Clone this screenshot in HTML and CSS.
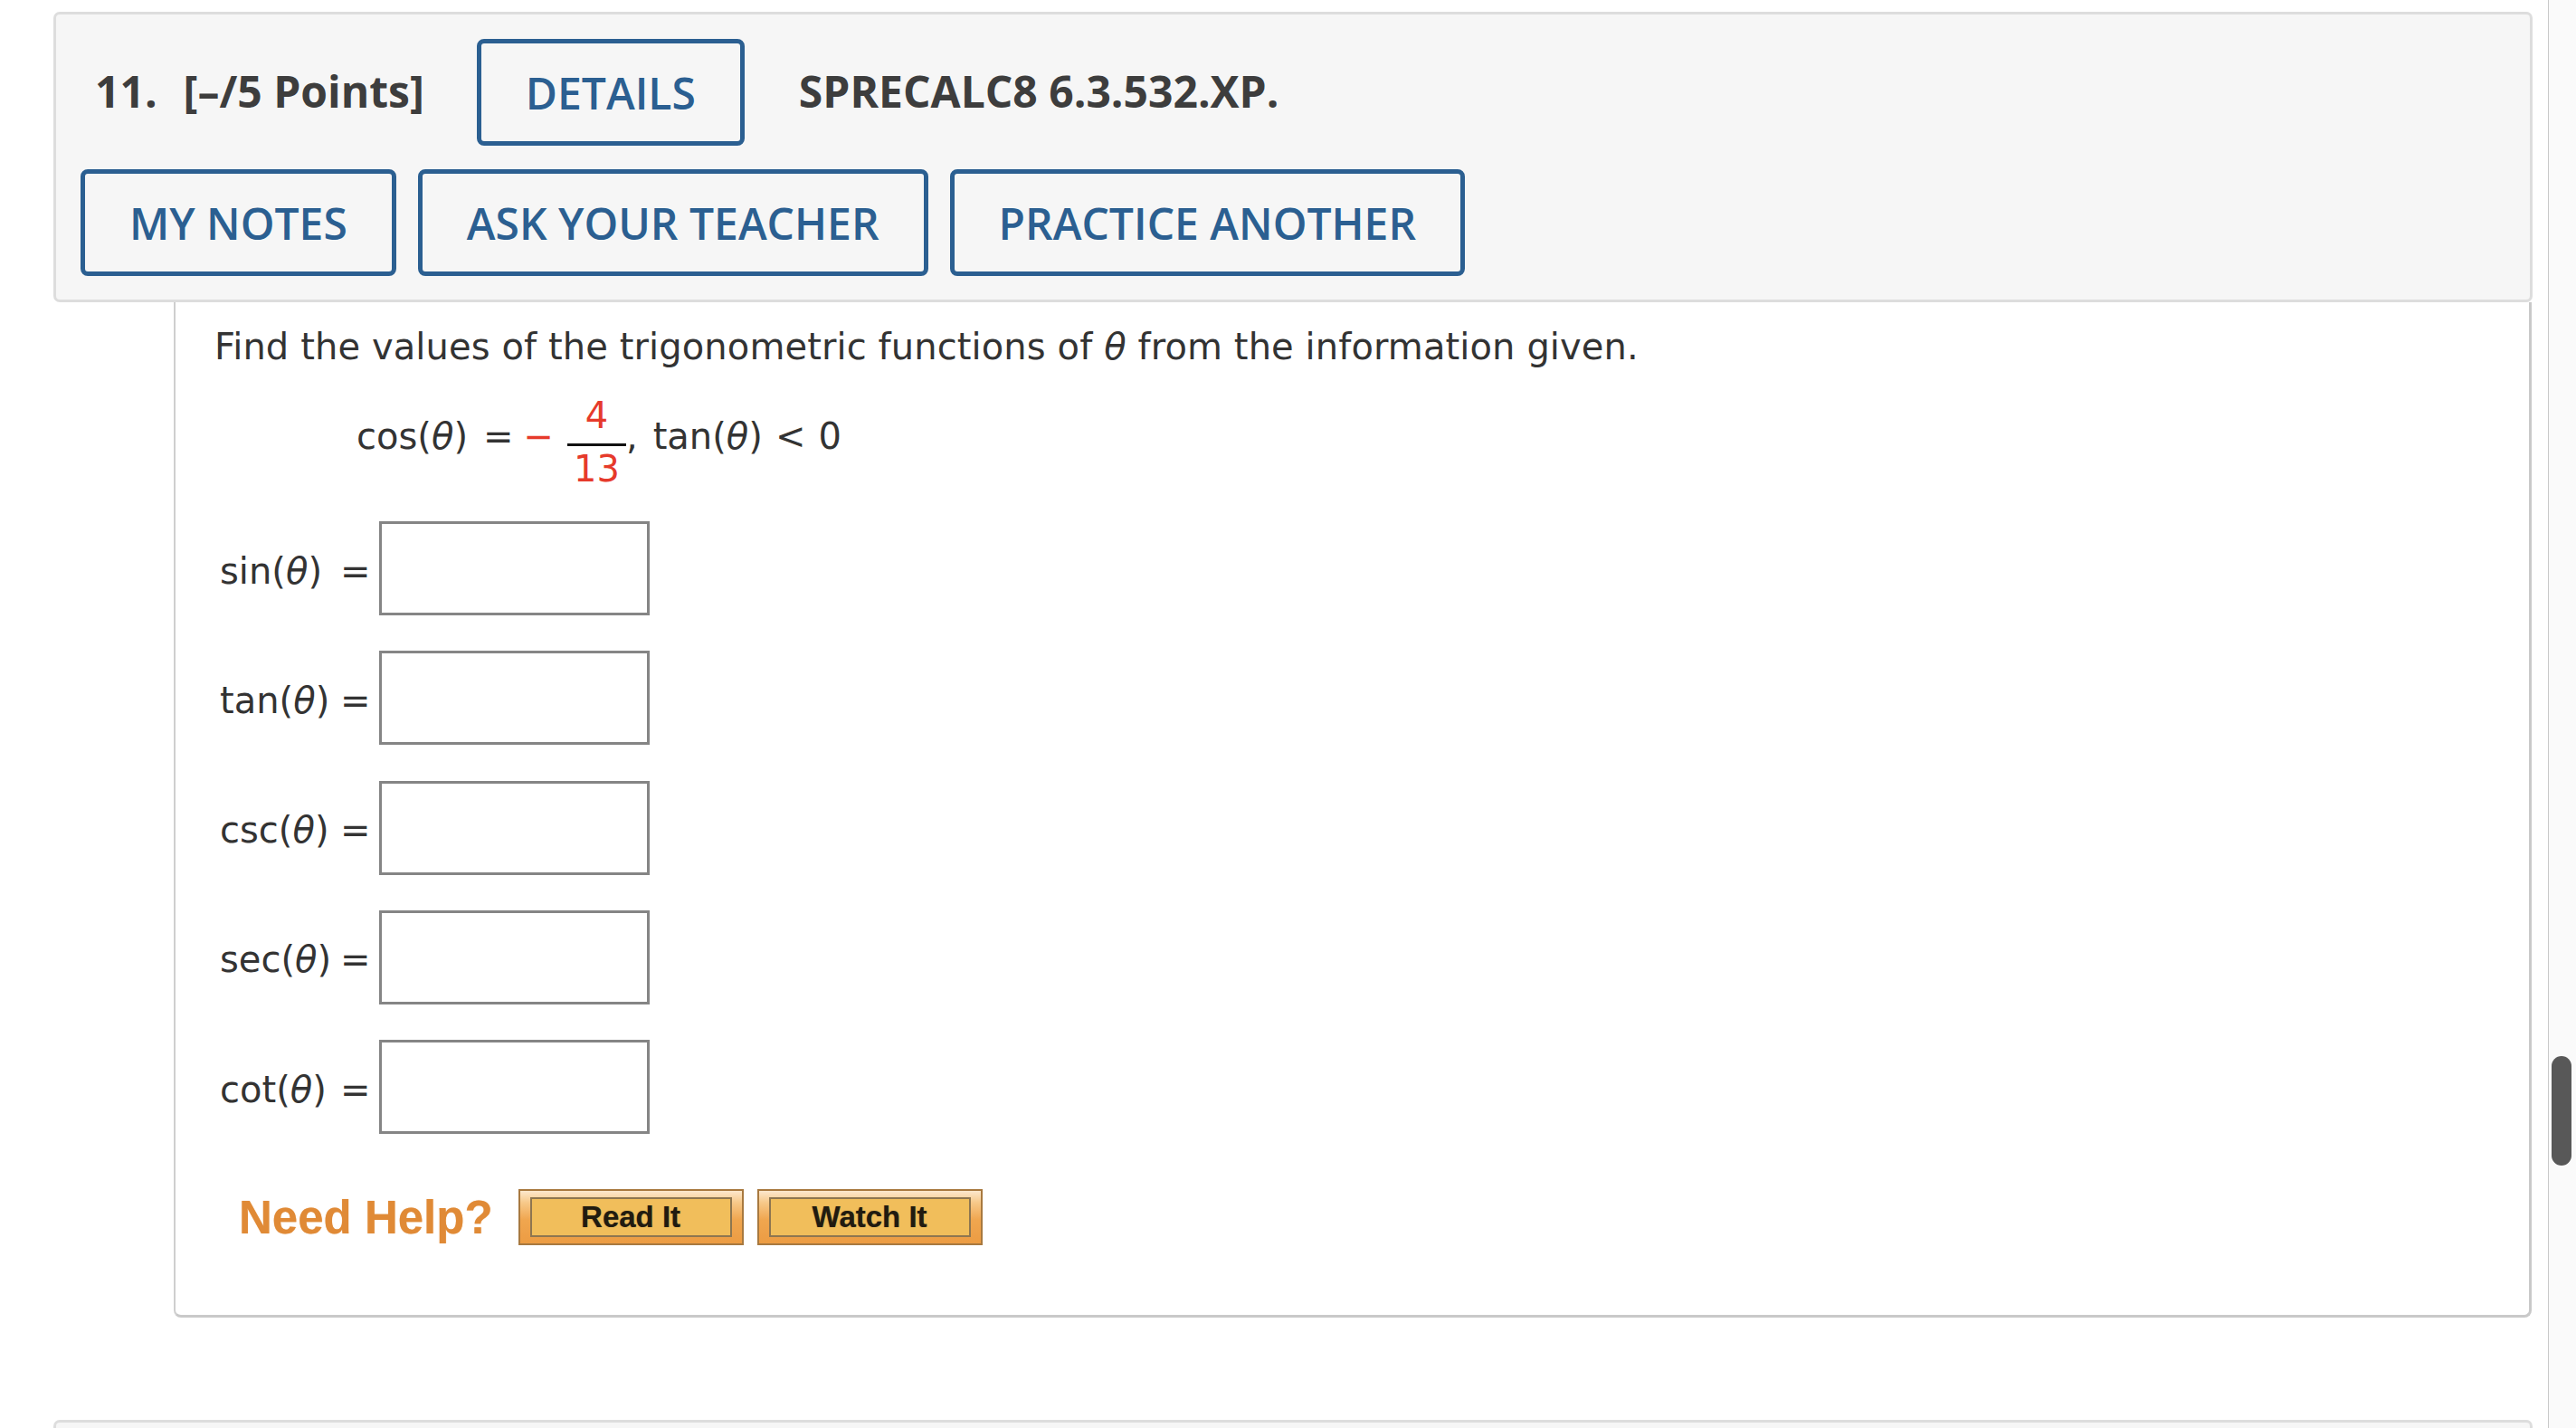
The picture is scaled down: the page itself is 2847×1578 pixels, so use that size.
FILE: index.html
```html
<!DOCTYPE html>
<html lang="en">
<head>
<meta charset="utf-8">
<title>Question 11</title>
<link rel="stylesheet" href="styles.css">
</head>
<body>
<div class="page">
  <main class="main">
    <section class="question">
      <header class="qhead">
        <div class="qrow qrow-top">
          <span class="qnum">11.</span>
          <span class="qpts">[–/5 Points]</span>
          <button class="btn btn-details">DETAILS</button>
          <span class="qcode">SPRECALC8 6.3.532.XP.</span>
        </div>
        <div class="qrow qrow-actions">
          <button class="btn">MY NOTES</button>
          <button class="btn">ASK YOUR TEACHER</button>
          <button class="btn">PRACTICE ANOTHER</button>
        </div>
      </header>
      <div class="qbody">
        <p class="prompt">Find the values of the trigonometric functions of <i>θ</i> from the information given.</p>
        <div class="eqn"><span class="fn">cos(<i>θ</i>)</span><span class="op">=</span><span class="neg">−</span><span class="frac"><span class="num">4</span><span class="bar"></span><span class="den">13</span></span><span class="comma">,</span><span class="tail">tan(<i>θ</i>)<span class="lt">&lt;</span>0</span></div>
        <div class="answers">
          <div class="arow"><span class="lbl">sin(<i>θ</i>)</span><span class="eq">=</span><input class="ans" type="text"></div>
          <div class="arow"><span class="lbl">tan(<i>θ</i>)</span><span class="eq">=</span><input class="ans" type="text"></div>
          <div class="arow"><span class="lbl">csc(<i>θ</i>)</span><span class="eq">=</span><input class="ans" type="text"></div>
          <div class="arow"><span class="lbl">sec(<i>θ</i>)</span><span class="eq">=</span><input class="ans" type="text"></div>
          <div class="arow"><span class="lbl">cot(<i>θ</i>)</span><span class="eq">=</span><input class="ans" type="text"></div>
        </div>
        <div class="help">
          <span class="help-title">Need Help?</span>
          <span class="hbtn"><span class="hbtn-in">Read It</span></span>
          <span class="hbtn"><span class="hbtn-in">Watch It</span></span>
        </div>
      </div>
    </section>
    <section class="question">
      <header class="qhead qhead-stub"></header>
    </section>
  </main>
  <div class="scrollbar"><div class="thumb"></div></div>
</div>
</body>
</html>
```
FILE: styles.css
```css
html, body {
  margin: 0;
  padding: 0;
  background: #ffffff;
  overflow: hidden;
}

.page {
  display: flex;
  width: 2847px;
  height: 1578px;
  overflow: hidden;
}

.main {
  flex: 1;
  padding: 13px 17px 0 59px;
  min-width: 0;
}

/* ---------- header ---------- */
.qhead {
  background: #f6f6f6;
  border: 3px solid #dddddd;
  border-radius: 7px;
  padding: 27px 27px 26px 27px;
  font-family: "Open Sans", "Liberation Sans", sans-serif;
  color: #3d3d3d;
}

.qrow {
  display: flex;
  align-items: center;
}

.qrow-top {
  padding-left: 16px;
  margin-bottom: 26px;
}

.qrow-actions {
  gap: 24px;
}

.qnum, .qpts, .qcode {
  font-size: 48px;
  font-weight: 700;
  padding-bottom: 3px;
  white-space: nowrap;
}

.qnum {
  margin-right: 29px;
}

.qcode {
  margin-left: 60px;
}

.btn {
  display: inline-flex;
  align-items: center;
  justify-content: center;
  height: 118px;
  box-sizing: border-box;
  margin: 0;
  padding: 0 49px;
  border: 5px solid #2b5f91;
  border-radius: 8px;
  background: transparent;
  font-family: "Open Sans", "Liberation Sans", sans-serif;
  font-size: 48px;
  font-weight: 600;
  color: #2b5f91;
  white-space: nowrap;
}

.qrow-top .btn-details {
  margin-left: 58px;
}

.qhead-stub {
  height: 200px;
  padding: 0;
  border-bottom: none;
  border-radius: 7px 7px 0 0;
}

.question + .question {
  margin-top: 113px;
}

/* ---------- body ---------- */
.qbody {
  margin-left: 133px;
  margin-right: 1px;
  background: #ffffff;
  border: 3px solid #c9c9c9;
  border-left: 2px solid #cfcfcf;
  border-top: none;
  border-radius: 0 0 8px 8px;
  padding: 25px 40px 77px 43px;
  font-family: "DejaVu Sans", Verdana, sans-serif;
  font-size: 40px;
  color: #333333;
}

.qbody i {
  font-style: italic;
}

.prompt {
  margin: 0;
  line-height: 48px;
  letter-spacing: 0.1px;
}

.eqn {
  margin: 32px 0 0 157px;
  line-height: 48px;
  height: 99px;
  white-space: nowrap;
}

.op {
  margin-left: 17px;
}

.neg {
  color: #e63a2b;
  margin-left: 11px;
}

.frac {
  display: inline-flex;
  flex-direction: column;
  align-items: center;
  vertical-align: 23px;
  margin-left: 15px;
  line-height: 40px;
}

.num, .den {
  color: #e63a2b;
  line-height: 40px;
  height: 40px;
}

.bar {
  display: block;
  align-self: stretch;
  height: 3px;
  background: #111111;
  margin: 11px 0 5px 0;
}

.den {
  padding: 0 7px;
}

.tail {
  margin-left: 17px;
}

.lt {
  margin: 0 14px;
}

/* ---------- answers ---------- */
.answers {
  margin: 38px 0 0 6px;
  display: flex;
  flex-direction: column;
  gap: 39.25px;
}

.arow {
  display: flex;
  align-items: center;
  height: 104px;
}

.lbl, .eq {
  padding-top: 5px;
  white-space: nowrap;
}

.lbl {
  width: 133px;
}

.eq {
  width: 34px;
}

.ans {
  margin: 0 0 0 9px;
  padding: 0;
  width: 299px;
  height: 104px;
  box-sizing: border-box;
  border: 3px solid #858585;
  border-radius: 0;
  background: #ffffff;
  outline: none;
}

/* ---------- need help ---------- */
.help {
  display: flex;
  align-items: center;
  margin: 61px 0 0 27px;
}

.help-title {
  font-family: "Liberation Sans", Arial, sans-serif;
  font-weight: 700;
  font-size: 51px;
  color: #e08a36;
  margin-right: 28px;
  text-shadow: 0 0 1px rgba(224, 138, 54, 0.6);
}

.hbtn {
  display: inline-flex;
  box-sizing: border-box;
  width: 249px;
  height: 62px;
  padding: 7px 11px;
  border: 2px solid #a8793f;
  background: linear-gradient(#fde8cd 0%, #f7c98a 22%, #f0a64f 55%, #ec9c43 100%);
}

.hbtn + .hbtn {
  margin-left: 15px;
}

.hbtn-in {
  flex: 1;
  display: flex;
  align-items: center;
  justify-content: center;
  border: 2px solid #8e7650;
  background: #f1be5b;
  font-family: "Liberation Sans", Arial, sans-serif;
  font-weight: 700;
  font-size: 33px;
  color: #211b10;
  text-shadow: 0 0 1px rgba(33, 27, 16, 0.5);
}

/* ---------- scrollbar ---------- */
.scrollbar {
  width: 31px;
  box-sizing: border-box;
  border-left: 1px solid #c9c9c9;
  background: #fafafa;
  padding: 1167px 0 0 3px;
}

.thumb {
  width: 22px;
  height: 121px;
  border-radius: 11px;
  background: #585858;
}
```
